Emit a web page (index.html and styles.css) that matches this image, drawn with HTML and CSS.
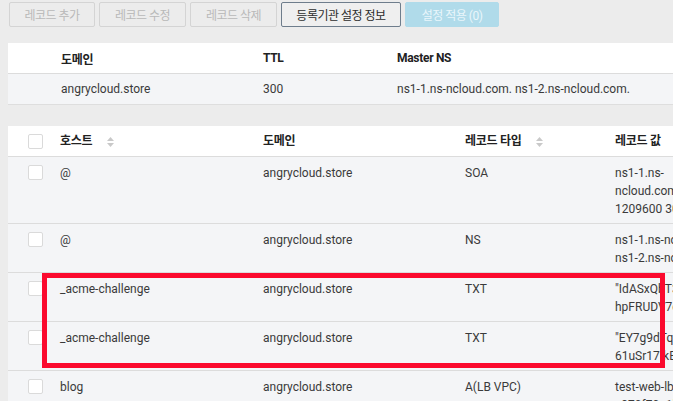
FILE: index.html
```html
<!DOCTYPE html>
<html lang="ko">
<head>
    <meta charset="UTF-8">
    <meta name="viewport" content="width=device-width, initial-scale=1.0">
    <title>DNS 레코드</title>
    <link rel="stylesheet" href="styles.css">
</head>
<body>
    <div class="toolbar">
        <button class="btn btn-off w86" disabled>레코드 추가</button>
        <button class="btn btn-off w87" disabled>레코드 수정</button>
        <button class="btn btn-off w87" disabled>레코드 삭제</button>
        <button class="btn btn-line w120">등록기관 설정 정보</button>
        <button class="btn btn-apply w94">설정 적용 (0)</button>
    </div>

    <div class="panel zone">
        <div class="zone-row zone-head">
            <div class="cell first">도메인</div>
            <div class="cell">TTL</div>
            <div class="cell">Master NS</div>
        </div>
        <div class="zone-row zone-data">
            <div class="cell first">angrycloud.store</div>
            <div class="cell">300</div>
            <div class="cell">ns1-1.ns-ncloud.com. ns1-2.ns-ncloud.com.</div>
        </div>
    </div>

    <div class="panel records">
        <div class="rec-row rec-head">
            <div class="cell chk"><span class="box"></span></div>
            <div class="cell">호스트 <span class="sort"><svg width="7" height="10" viewBox="0 0 7 10"><path d="M3.5 0L7 4H0z M0 6h7L3.5 10z" fill="#c9c9c9"/></svg></span></div>
            <div class="cell">도메인</div>
            <div class="cell">레코드 타입 <span class="sort"><svg width="7" height="10" viewBox="0 0 7 10"><path d="M3.5 0L7 4H0z M0 6h7L3.5 10z" fill="#c9c9c9"/></svg></span></div>
            <div class="cell">레코드 값</div>
        </div>
        <div class="rec-row">
            <div class="cell chk"><span class="box"></span></div>
            <div class="cell">@</div>
            <div class="cell">angrycloud.store</div>
            <div class="cell">SOA</div>
            <div class="cell val">ns1-1.ns-<br>ncloud.com. ns1-2.ns-ncloud.com.<br>1209600 300</div>
        </div>
        <div class="rec-row">
            <div class="cell chk"><span class="box"></span></div>
            <div class="cell">@</div>
            <div class="cell">angrycloud.store</div>
            <div class="cell">NS</div>
            <div class="cell val">ns1-1.ns-ncloud.com.<br>ns1-2.ns-ncloud.com.</div>
        </div>
        <div class="rec-row">
            <div class="cell chk"><span class="box"></span></div>
            <div class="cell">_acme-challenge</div>
            <div class="cell">angrycloud.store</div>
            <div class="cell">TXT</div>
            <div class="cell val">"IdASxQbT3kzW9vLm<br>hpFRUDV7cK2a0"</div>
        </div>
        <div class="rec-row">
            <div class="cell chk"><span class="box"></span></div>
            <div class="cell">_acme-challenge</div>
            <div class="cell">angrycloud.store</div>
            <div class="cell">TXT</div>
            <div class="cell val">"EY7g9dTqW0nPz4<br>61uSr17IkB8x"</div>
        </div>
        <div class="rec-row">
            <div class="cell chk"><span class="box"></span></div>
            <div class="cell">blog</div>
            <div class="cell">angrycloud.store</div>
            <div class="cell">A(LB VPC)</div>
            <div class="cell val">test-web-lb-<br>c970f70a1b2.kr.lb.naverncp.com</div>
        </div>

        <div class="mark"></div>
    </div>
</body>
</html>
```

FILE: styles.css
```css
html, body{
    overflow: hidden;
}

body{
    margin: 0px;
    padding: 2px 0 0 0;
    background: #ececec;
    font-family: Roboto, "Noto Sans CJK KR", sans-serif;
    font-size: 12px;
    color: #3a3a3a;
}

/* top buttons */
.toolbar{
    display: flex;
    gap: 4px;
    padding-left: 9px;
    height: 25px;
}

.btn{
    height: 25px;
    padding: 0;
    font-family: Roboto, "Noto Sans CJK KR", sans-serif;
    font-size: 12px;
    letter-spacing: -0.5px;
    border-radius: 2px;
    border: 1px solid #d4d4d4;
    background: #ececec;
}
.w86{ width: 86px; }
.w87{ width: 87px; }
.w94{ width: 94px; }
.w120{ width: 120px; }

.btn-off{
    color: #b9b9b9;
}
.btn-line{
    border-color: #6e7d8c;
    color: #2d2d2d;
    background: #efefef;
}
.btn-apply{
    border-color: #b0dbea;
    background: #b0dbea;
    color: #e9f6fb;
}

/* panels */
.panel{
    width: 1000px;
    margin-left: 8px;
    background: #f4f5f7;
}

.zone{
    margin-top: 16px;
    border-bottom: 1px solid #dedede;
}

.records{
    position: relative;
    margin-top: 21px;
}

.cell{
    padding: 0 8px;
    white-space: nowrap;
}

.zone-row{
    display: grid;
    grid-template-columns: 247px 134px 1fr;
    align-items: center;
    height: 30px;
}
.zone-row .first{
    padding-left: 53px;
}
.zone-head{
    background: #fff;
    border-bottom: 1px solid #dcdcdc;
}

.zone-head .cell,
.rec-head .cell{
    font-weight: bold;
    color: #222;
    letter-spacing: -0.3px;
}

.rec-row{
    display: grid;
    grid-template-columns: 44px 203px 202px 150px 1fr;
    line-height: 18px;
    padding: 7px 0 5px 0;
    border-top: 1px solid #dcdcdc;
}
.rec-head{
    background: #fff;
    border-top: none;
    height: 30px;
    padding: 0;
    align-items: center;
    box-sizing: border-box;
}

.chk{
    padding-left: 20px;
}
.box{
    display: inline-block;
    width: 13px;
    height: 13px;
    margin-top: 1px;
    background: #fff;
    border: 1px solid #dadada;
    border-radius: 2px;
    vertical-align: top;
}
.rec-head .box{
    margin-top: 0;
    vertical-align: middle;
}

.sort{
    display: inline-block;
    margin-left: 12px;
    vertical-align: middle;
    line-height: 0;
}

.val{
    overflow: hidden;
}

/* highlight around the acme rows */
.mark{
    position: absolute;
    left: 34px;
    top: 147px;
    width: 613px;
    height: 85px;
    border: 5px solid #fb0a2e;
}
```
